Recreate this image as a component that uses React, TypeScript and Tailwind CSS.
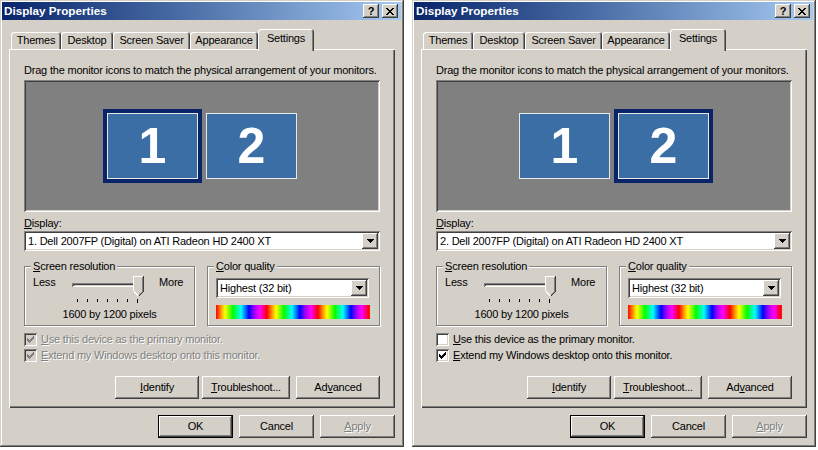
import React from "react";

const raised =
  "shadow-[inset_-1px_-1px_#404040,inset_1px_1px_#ffffff,inset_-2px_-2px_#808080,inset_2px_2px_#d4d0c8]";
const sunken =
  "shadow-[inset_1px_1px_#808080,inset_-1px_-1px_#ffffff,inset_2px_2px_#404040,inset_-2px_-2px_#d4d0c8]";
const frame =
  "shadow-[inset_-1px_-1px_#404040,inset_1px_1px_#d4d0c8,inset_-2px_-2px_#808080,inset_2px_2px_#ffffff]";
const disabledText = "text-[#808080] [text-shadow:1px_1px_0_#ffffff]";

function Pix({ rows, color }: { rows: string[]; color: string }) {
  const w = rows[0].length;
  const h = rows.length;
  return (
    <svg width={w} height={h} shapeRendering="crispEdges" className="block">
      {rows.flatMap((r, y) =>
        r.split("").map((c, x) =>
          c === "X" ? (
            <rect key={`${x}-${y}`} x={x} y={y} width={1} height={1} fill={color} />
          ) : null
        )
      )}
    </svg>
  );
}

const CLOSE = [
  "XX....XX",
  ".XX..XX.",
  "..XXXX..",
  "...XX...",
  "..XXXX..",
  ".XX..XX.",
  "XX....XX",
];
const ARROW = ["XXXXXXX", ".XXXXX.", "..XXX..", "...X..."];
const CHECK = [
  "......X",
  ".....XX",
  "X...XXX",
  "XX.XXX.",
  "XXXXX..",
  ".XXX...",
  "..X....",
];

function TitleBar() {
  return (
    <div className="h-[18px] flex items-center bg-linear-to-r from-[#0a246a] to-[#a6caf0] pl-[2px] pr-[3px]">
      <span className="font-bold text-white text-[11.7px] leading-[14px] tracking-normal">
        Display Properties
      </span>
      <div className="ml-auto flex gap-[3px]">
        <div className={`w-[16px] h-[14px] bg-[#d4d0c8] ${raised} flex items-center justify-center`}>
          <span className="font-bold text-[11px] leading-[11px] text-black tracking-normal">?</span>
        </div>
        <div className={`w-[16px] h-[14px] bg-[#d4d0c8] ${raised} flex items-center justify-center`}>
          <Pix rows={CLOSE} color="#000" />
        </div>
      </div>
    </div>
  );
}

const tabs: { label: string; w: string }[] = [
  { label: "Themes", w: "w-[50px]" },
  { label: "Desktop", w: "w-[52px]" },
  { label: "Screen Saver", w: "w-[77px]" },
  { label: "Appearance", w: "w-[68px]" },
];

const tabShadow =
  "shadow-[inset_1px_1px_#ffffff,inset_-1px_0_#404040,inset_-2px_0_#808080]";

function Tabs() {
  return (
    <div className="flex items-end h-[20px] pl-[2px]">
      {tabs.map((t) => (
        <div
          key={t.label}
          className={`${t.w} h-[17px] pt-[2px] flex justify-center rounded-t-[3px] ${tabShadow}`}
        >
          {t.label}
        </div>
      ))}
      <div
        className={`relative z-10 w-[56px] h-[22px] mb-[-2px] pt-[3px] flex justify-center bg-[#d4d0c8] rounded-t-[3px] ${tabShadow}`}
      >
        Settings
      </div>
    </div>
  );
}

function Combo({ text }: { text: string }) {
  return (
    <div className={`flex items-center h-[20px] bg-white ${sunken} pl-[4px] pr-[2px]`}>
      <span className="flex-1 whitespace-nowrap overflow-hidden">{text}</span>
      <div className={`w-[16px] h-[16px] bg-[#d4d0c8] ${raised} flex items-center justify-center`}>
        <Pix rows={ARROW} color="#000" />
      </div>
    </div>
  );
}

function Monitor({ n, sel }: { n: number; sel: boolean }) {
  return (
    <div
      className={`w-[91px] h-[66px] bg-[#3a6ea5] border border-[#e8e8e8] flex items-center justify-center text-white font-bold text-[50px] leading-none tracking-normal ${
        sel ? "outline-4 outline-[#0a246a]" : ""
      }`}
    >
      {n}
    </div>
  );
}

function Group({
  label,
  w,
  children,
}: {
  label: React.ReactNode;
  w: string;
  children: React.ReactNode;
}) {
  return (
    <div
      className={`relative ${w} h-[60px] border border-[#808080] shadow-[inset_1px_1px_#ffffff,1px_1px_#ffffff]`}
    >
      <span className="absolute left-[6px] top-[-7px] px-[2px] bg-[#d4d0c8] whitespace-nowrap">
        {label}
      </span>
      {children}
    </div>
  );
}

function Slider() {
  const ticks = [0, 1, 2, 3, 4, 5, 6];
  return (
    <div className="w-[72px] flex flex-col">
      <div className="relative h-[20px]">
        <div className={`absolute left-0 top-[7px] w-[70px] h-[4px] ${sunken}`} />
        <svg
          className="absolute left-[61px] top-0"
          width="11"
          height="21"
          shapeRendering="crispEdges"
        >
          <polygon points="0,0 10,0 10,15 5,20 0,15" fill="#d4d0c8" />
          <path d="M0.5 15 V0.5 H9.5" stroke="#ffffff" fill="none" />
          <path d="M1 15.5 L5 19.5" stroke="#ffffff" fill="none" />
          <path d="M9.5 1 V15.5 L5.5 19.5" stroke="#808080" fill="none" />
          <path d="M10.5 0 V15.5 L5.5 20.5" stroke="#404040" fill="none" />
        </svg>
      </div>
      <div className="flex items-start h-[4px] mt-[3px] pl-[5px]">
        {ticks.map((i) => (
          <div
            key={i}
            className={`w-[1px] bg-black ${i === 6 ? "h-[4px]" : "h-[3px]"} ${i === 0 ? "" : "ml-[9px]"}`}
          />
        ))}
      </div>
    </div>
  );
}

function Check({
  checked,
  disabled,
  children,
}: {
  checked: boolean;
  disabled: boolean;
  children: React.ReactNode;
}) {
  return (
    <div className="flex items-center h-[13px]">
      <div
        className={`w-[13px] h-[13px] ${disabled ? "bg-[#d4d0c8]" : "bg-white"} ${sunken} flex items-center justify-center`}
      >
        {checked && <Pix rows={CHECK} color={disabled ? "#808080" : "#000"} />}
      </div>
      <span className={`ml-[4px] whitespace-nowrap ${disabled ? disabledText : ""}`}>{children}</span>
    </div>
  );
}

function Btn({
  w,
  children,
  def,
  disabled,
}: {
  w: string;
  children: React.ReactNode;
  def?: boolean;
  disabled?: boolean;
}) {
  if (def) {
    return (
      <div className={`${w} h-[23px] border border-black`}>
        <div className={`w-full h-full bg-[#d4d0c8] ${raised} flex items-center justify-center`}>
          {children}
        </div>
      </div>
    );
  }
  return (
    <div
      className={`${w} h-[23px] bg-[#d4d0c8] ${raised} flex items-center justify-center ${
        disabled ? disabledText : ""
      }`}
    >
      {children}
    </div>
  );
}

function Dialog({
  selected,
  display,
  disabled,
  primary,
  extend,
}: {
  selected: number;
  display: string;
  disabled: boolean;
  primary: boolean;
  extend: boolean;
}) {
  return (
    <div className={`w-[404px] h-[447px] bg-[#d4d0c8] pt-[2px] pl-[2px] pr-[3px] flex flex-col ${frame}`}>
      <TitleBar />
      <div className="ml-[7px] w-[386px] mt-[9px]">
        <Tabs />
        <div
          className={`h-[359px] px-[15px] pt-[15px] flex flex-col shadow-[inset_1px_1px_#ffffff,inset_-1px_-1px_#404040,inset_-2px_-2px_#808080]`}
        >
          <div className="whitespace-nowrap">
            Drag the monitor icons to match the physical arrangement of your monitors.
          </div>
          <div
            className={`mt-[3px] h-[132px] bg-[#808080] ${sunken} flex items-center justify-center gap-[8px]`}
          >
            <Monitor n={1} sel={selected === 1} />
            <Monitor n={2} sel={selected === 2} />
          </div>
          <div className="mt-[5px]">
            <u>D</u>isplay:
          </div>
          <div className="mt-[1px]">
            <Combo text={display} />
          </div>
          <div className="mt-[15px] flex justify-between">
            <Group
              w="w-[171px]"
              label={
                <>
                  <u>S</u>creen resolution
                </>
              }
            >
              <div className="flex flex-col pt-[9px]">
                <div className="flex items-start">
                  <span className="ml-[8px] w-[39px]">Less</span>
                  <Slider />
                  <span className="ml-[15px]">More</span>
                </div>
                <div className="mt-[5px] text-center">1600 by 1200 pixels</div>
              </div>
            </Group>
            <Group
              w="w-[173px]"
              label={
                <>
                  <u>C</u>olor quality
                </>
              }
            >
              <div className="flex flex-col pt-[11px] pl-[8px]">
                <div className="w-[153px]">
                  <Combo text="Highest (32 bit)" />
                </div>
                <div className="mt-[7px] w-[154px] h-[14px] bg-[repeating-linear-gradient(90deg,#ff0000_0px,#ff9900_5px,#ffff00_9px,#00ff00_17px,#00ffff_25px,#0000ff_33px,#9900ff_38px,#ff00ff_44px,#ff0000_51px)]" />
              </div>
            </Group>
          </div>
          <div className="mt-[7px] flex flex-col gap-[3px]">
            <Check checked={primary} disabled={disabled}>
              <u>U</u>se this device as the primary monitor.
            </Check>
            <Check checked={extend} disabled={disabled}>
              <u>E</u>xtend my Windows desktop onto this monitor.
            </Check>
          </div>
          <div className="mt-[14px] flex justify-end">
            <Btn w="w-[84px]">
              <span>
                <u>I</u>dentify
              </span>
            </Btn>
            <div className="ml-[3px]">
              <Btn w="w-[88px]">
                <span>
                  <u>T</u>roubleshoot...
                </span>
              </Btn>
            </div>
            <div className="ml-[6px]">
              <Btn w="w-[84px]">
                <span>
                  Ad<u>v</u>anced
                </span>
              </Btn>
            </div>
          </div>
        </div>
      </div>
      <div className="ml-[7px] w-[386px] mt-[7px] flex justify-end gap-[6px]">
        <Btn w="w-[75px]" def>
          OK
        </Btn>
        <Btn w="w-[75px]">Cancel</Btn>
        <Btn w="w-[75px]" disabled>
          <span>
            <u>A</u>pply
          </span>
        </Btn>
      </div>
    </div>
  );
}

export default function App() {
  return (
    <div className="w-[818px] h-[450px] bg-white flex font-['Liberation_Sans',Arial,sans-serif] text-[11px] leading-[13px] tracking-[-0.2px] text-black">
      <Dialog
        selected={1}
        display="1. Dell 2007FP (Digital) on ATI Radeon HD 2400 XT"
        disabled={true}
        primary={true}
        extend={true}
      />
      <div className="ml-[8px]">
        <Dialog
          selected={2}
          display="2. Dell 2007FP (Digital) on ATI Radeon HD 2400 XT"
          disabled={false}
          primary={false}
          extend={true}
        />
      </div>
    </div>
  );
}
